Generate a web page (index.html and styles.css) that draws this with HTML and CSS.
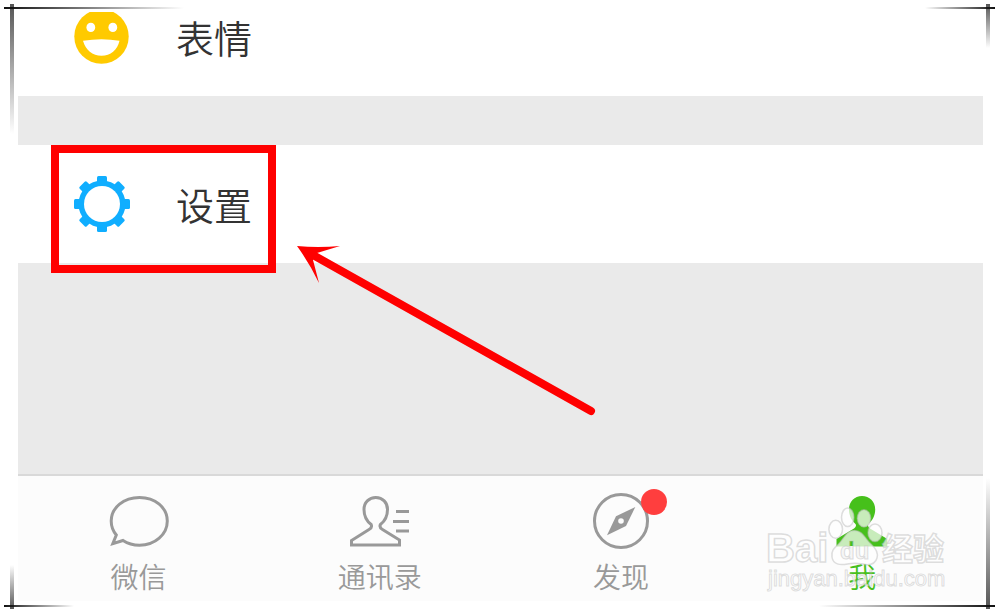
FILE: index.html
```html
<!DOCTYPE html>
<html lang="zh-CN">
<head>
    <meta charset="UTF-8">
    <meta name="viewport" content="width=device-width, initial-scale=1.0">
    <title>微信 - 我</title>
    <link rel="stylesheet" href="styles.css">
</head>
<body>

<div class="screen">
    <main class="list">
        <a class="cell cell-first" href="#emoji">
            <svg class="cell-icon" width="56" height="53" viewBox="0 3 56 53" aria-hidden="true">
                <circle cx="27.5" cy="27.5" r="27.2" fill="#ffca00"/>
                <ellipse cx="16.8" cy="18.4" rx="4.4" ry="4.7" fill="#fff"/>
                <ellipse cx="38.8" cy="18.4" rx="4.4" ry="4.7" fill="#fff"/>
                <path d="M9 31.8 Q27.5 28.6 45.5 31.8 C43.5 41 36.5 46.8 27.5 46.8 S11.5 41 9 31.8Z" fill="#fff"/>
            </svg>
            <span>表情</span>
        </a>

        <div class="settings-group">
            <a class="cell" href="#settings">
                <svg class="cell-icon" width="56" height="56" viewBox="0 0 56 56" aria-hidden="true">
                    <g fill="#10aeff">
                        <rect x="23" y="0" width="10" height="56" rx="1.5"/>
                        <rect x="23" y="0" width="10" height="56" rx="1.5" transform="rotate(45 28 28)"/>
                        <rect x="23" y="0" width="10" height="56" rx="1.5" transform="rotate(90 28 28)"/>
                        <rect x="23" y="0" width="10" height="56" rx="1.5" transform="rotate(135 28 28)"/>
                        <circle cx="28" cy="28" r="23.5"/>
                    </g>
                    <circle cx="28" cy="28" r="18" fill="#fff"/>
                </svg>
                <span>设置</span>
            </a>
            <div class="highlight"></div>
            <svg class="arrow" width="300" height="172" viewBox="0 0 300 172" aria-hidden="true">
                <path d="M17 11 L295 167" stroke="#f00" stroke-width="8" stroke-linecap="round"/>
                <path d="M1 2 Q22 4 44 2 L21 9 L17 16 L23 39 Q14 20 1 2Z" fill="#f00"/>
            </svg>
        </div>
    </main>

    <nav class="tabbar">
        <a class="tab" href="#chats">
            <span class="tab-icon">
                <svg width="64" height="60" viewBox="0 0 64 60" fill="none" stroke="#999" stroke-width="3" aria-hidden="true">
                    <path d="M9.3 45 C6 41 4.2 36 4.2 31 C4.2 17.5 17 7.5 32.5 7.5 S60.3 17.5 60.3 31 S48 55.2 32.5 55.2 C26.5 55.2 20.5 53.5 16 50.5 L5.8 53.7 Z"/>
                </svg>
            </span>
            <span>微信</span>
        </a>
        <a class="tab" href="#contacts">
            <span class="tab-icon">
                <svg width="64" height="60" viewBox="0 0 64 60" fill="none" stroke="#999" stroke-width="3" aria-hidden="true">
                    <path d="M3.5 55 V50.5 L21 39.5 Q24.5 37.5 23.2 34.5 C18.5 31 16 26 16 19.5 C16 12.5 21 7.5 27.8 7.5 S39.5 12.5 39.5 19.5 C39.5 26 37 31 32.4 34.5 Q31 37.5 34.5 39.5 L51.5 50 V55 Z"/>
                    <path d="M48 21.5 H61 M45 31.5 H61 M48 41 H61"/>
                </svg>
            </span>
            <span>通讯录</span>
        </a>
        <a class="tab" href="#discover">
            <span class="tab-icon">
                <svg width="64" height="60" viewBox="0 0 64 60" aria-hidden="true">
                    <circle cx="32" cy="31" r="26.5" fill="none" stroke="#999" stroke-width="3"/>
                    <path d="M46.3 17 L37 36 L18 45.3 L27 26.3 Z" fill="#999"/>
                    <circle cx="32" cy="31" r="2.8" fill="#fcfcfc"/>
                </svg>
                <span class="badge"></span>
            </span>
            <span>发现</span>
        </a>
        <a class="tab active" href="#me">
            <span class="tab-icon">
                <svg width="64" height="60" viewBox="0 0 64 60" aria-hidden="true">
                    <path d="M6.5 56.5 V49 L24 38.5 Q27 36.5 25.5 34 C21.5 30.5 19 25.5 19 19.5 C19 11.5 24.5 6 32 6 S45.2 11.5 45.2 19.5 C45.2 25.5 42.5 30.5 38.5 34 Q37 36.5 40 38.5 L57.3 49 V56.5 Z" fill="#46c01b"/>
                </svg>
            </span>
            <span>我</span>
        </a>

        <svg class="watermark" width="186" height="96" viewBox="0 0 186 96">
            <defs>
                <linearGradient id="duFill" gradientUnits="userSpaceOnUse" x1="0" y1="40" x2="0" y2="64">
                    <stop offset="0.27" stop-color="#46c01b"/>
                    <stop offset="0.27" stop-color="#f6f6f6"/>
                </linearGradient>
            </defs>
            <g class="watermark-shape">
                <ellipse cx="71.7" cy="29.3" rx="6.8" ry="9"/>
                <ellipse cx="83.7" cy="17.3" rx="6.2" ry="9.3"/>
                <ellipse cx="100" cy="18.3" rx="6.6" ry="8.6"/>
                <ellipse cx="111" cy="32.7" rx="7" ry="8.8"/>
                <path d="M90.5 30.5 C99 30.5 101 39 107 44 C112 48.5 114.5 53 113 58 C111 65 104 65.5 97 63.8 C92 62.8 88 63 83.5 64 C76 65.5 69 64.5 68 57 C67 50 71 47.5 75 43.5 C80 38.5 82.5 30.5 90.5 30.5Z"/>
                <text class="watermark-bai" x="2" y="62">Bai</text>
                <text class="watermark-jy" x="118" y="60">经验</text>
                <text class="watermark-url" x="4" y="86">jingyan.baidu.com</text>
            </g>
            <text class="watermark-du" x="76" y="59">du</text>
        </svg>
    </nav>
</div>

<div class="corner corner-tl"></div>
<div class="corner corner-tr"></div>
<div class="corner corner-bl"></div>
<div class="corner corner-br"></div>

</body>
</html>
```
FILE: styles.css
```css
* {
    box-sizing: border-box;
}
body {
    margin: 0;
    padding: 12px 17px 13px 18px;
    min-height: 100vh;
    display: flex;
    position: relative;
    background-color: white;
    font-family: "Noto Sans CJK SC", sans-serif;
    font-weight: 350;
}
a {
    color: inherit;
    text-decoration: none;
}
.screen {
    flex: 1;
    display: flex;
    flex-direction: column;
    background-color: #eaeaea;
}

/* list */
.list {
    flex: 1;
    display: flex;
    flex-direction: column;
    gap: 49px;
}
.cell {
    display: flex;
    align-items: center;
    gap: 46px;
    padding: 31px 56px;
    background-color: white;
    color: #333;
    font-size: 38px;
    line-height: 56px;
}
.cell-first {
    padding-top: 0;
    line-height: 50px;
    align-items: flex-start;
}
.cell-icon {
    flex: none;
}
.settings-group {
    position: relative;
}
.highlight {
    position: absolute;
    left: 33px;
    top: 0;
    width: 225px;
    height: 128px;
    border: 8px solid #f00;
    pointer-events: none;
}
.arrow {
    position: absolute;
    left: 278px;
    top: 99px;
    pointer-events: none;
}

/* bottom tabs */
.tabbar {
    position: relative;
    display: grid;
    grid-template-columns: repeat(4, 1fr);
    border-top: 2px solid #d9d9d9;
    background-color: #fcfcfc;
}
.tab {
    display: flex;
    flex-direction: column;
    align-items: center;
    gap: 11px;
    padding: 14px 0 10px;
    color: #999;
    font-size: 28px;
    line-height: 30px;
}
.tab.active {
    color: #46c01b;
}
.tab-icon {
    position: relative;
    display: flex;
}
.badge {
    position: absolute;
    right: -14px;
    top: -1px;
    width: 26px;
    height: 26px;
    border-radius: 50%;
    background-color: #ff3e3e;
}

/* watermark */
.watermark {
    position: absolute;
    right: 33px;
    bottom: 5px;
    pointer-events: none;
    font-family: "Liberation Sans", "Noto Sans CJK SC", sans-serif;
}
.watermark-shape {
    fill: rgba(255, 255, 255, 0.7);
    stroke: rgba(190, 190, 190, 0.5);
    stroke-width: 1.5px;
}
.watermark-bai {
    font-size: 40px;
    font-weight: bold;
}
.watermark-jy {
    font-size: 31px;
    font-weight: bold;
}
.watermark-url {
    font-size: 22px;
    stroke-width: 1px;
}
.watermark-du {
    font-size: 24px;
    font-weight: bold;
    fill: url(#duFill);
    stroke: rgba(190, 190, 190, 0.5);
    stroke-width: 1px;
}

/* crossed lines on the frame corners */
.corner {
    position: absolute;
    pointer-events: none;
    background-repeat: no-repeat;
}
.corner-tl {
    left: 4px;
    top: 4px;
    width: 180px;
    height: 130px;
    background-image: linear-gradient(to right, #111, transparent), linear-gradient(to bottom, #555, transparent);
    background-size: 100% 2px, 4px 100%;
    background-position: left 0 top 3px, left 6px top 0;
}
.corner-tr {
    right: 5px;
    top: 4px;
    width: 70px;
    height: 44px;
    background-image: linear-gradient(to left, #111, transparent), linear-gradient(to bottom, #555, transparent);
    background-size: 100% 2px, 4px 100%;
    background-position: left 0 top 3px, right 5px top 0;
}
.corner-bl {
    left: 4px;
    bottom: 5px;
    width: 70px;
    height: 44px;
    background-image: linear-gradient(to right, #111, transparent), linear-gradient(to top, #555, transparent);
    background-size: 100% 2px, 4px 100%;
    background-position: left 0 bottom 2px, left 6px top 0;
}
.corner-br {
    right: 5px;
    bottom: 5px;
    width: 176px;
    height: 131px;
    background-image: linear-gradient(to left, #111, transparent), linear-gradient(to top, #555, transparent);
    background-size: 100% 2px, 4px 100%;
    background-position: left 0 bottom 2px, right 5px top 0;
}
```
